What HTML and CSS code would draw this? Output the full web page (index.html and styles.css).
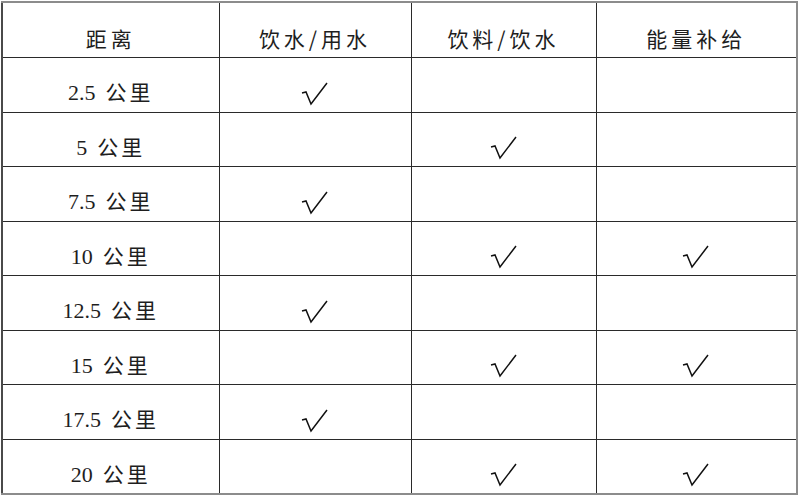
FILE: index.html
```html
<!DOCTYPE html>
<html lang="zh">
<head>
<meta charset="utf-8">
<link rel="stylesheet" href="styles.css">
</head>
<body>
<table class="grid">
  <colgroup>
    <col class="c1"><col class="c2"><col class="c3"><col class="c4">
  </colgroup>
  <thead>
    <tr class="head">
      <th>距离</th><th>饮水/用水</th><th>饮料/饮水</th><th>能量补给</th>
    </tr>
  </thead>
  <tbody>
    <tr><td class="km">2.5<span class="unit">公里</span></td><td><svg class="tick" viewBox="0 0 28 24"><path d="M1 11 L5 10 L10 22 L26 1"/></svg></td><td></td><td></td></tr>
    <tr><td class="km">5<span class="unit">公里</span></td><td></td><td><svg class="tick" viewBox="0 0 28 24"><path d="M1 11 L5 10 L10 22 L26 1"/></svg></td><td></td></tr>
    <tr><td class="km">7.5<span class="unit">公里</span></td><td><svg class="tick" viewBox="0 0 28 24"><path d="M1 11 L5 10 L10 22 L26 1"/></svg></td><td></td><td></td></tr>
    <tr><td class="km">10<span class="unit">公里</span></td><td></td><td><svg class="tick" viewBox="0 0 28 24"><path d="M1 11 L5 10 L10 22 L26 1"/></svg></td><td><svg class="tick" viewBox="0 0 28 24"><path d="M1 11 L5 10 L10 22 L26 1"/></svg></td></tr>
    <tr><td class="km">12.5<span class="unit">公里</span></td><td><svg class="tick" viewBox="0 0 28 24"><path d="M1 11 L5 10 L10 22 L26 1"/></svg></td><td></td><td></td></tr>
    <tr><td class="km">15<span class="unit">公里</span></td><td></td><td><svg class="tick" viewBox="0 0 28 24"><path d="M1 11 L5 10 L10 22 L26 1"/></svg></td><td><svg class="tick" viewBox="0 0 28 24"><path d="M1 11 L5 10 L10 22 L26 1"/></svg></td></tr>
    <tr><td class="km">17.5<span class="unit">公里</span></td><td><svg class="tick" viewBox="0 0 28 24"><path d="M1 11 L5 10 L10 22 L26 1"/></svg></td><td></td><td></td></tr>
    <tr><td class="km">20<span class="unit">公里</span></td><td></td><td><svg class="tick" viewBox="0 0 28 24"><path d="M1 11 L5 10 L10 22 L26 1"/></svg></td><td><svg class="tick" viewBox="0 0 28 24"><path d="M1 11 L5 10 L10 22 L26 1"/></svg></td></tr>
  </tbody>
</table>
</body>
</html>
```
FILE: styles.css
```css
html, body {
  margin: 0;
  padding: 0;
  background: #ffffff;
}
body {
  padding: 1px 0 0 1px;
}
.grid {
  border-collapse: collapse;
  table-layout: fixed;
  width: 796px;
  border: 2px solid #8c8c8c;
  border-left-color: #4a4a4a;
  color: #1e1e1e;
  font-family: "Liberation Serif", "Noto Sans CJK SC", serif;
  font-size: 22px;
}
.c1 { width: 217px; }
.c2 { width: 192px; }
.c3 { width: 185px; }
.c4 { width: 201px; }
.grid th, .grid td {
  border: 1px solid #2a2a2a;
  text-align: center;
  vertical-align: middle;
  padding: 16px 0 0 0;
  line-height: 24px;
  box-sizing: content-box;
}
.grid th {
  font-weight: normal;
  height: 39px;
  padding-top: 15px;
  letter-spacing: 4px;
  font-family: "Noto Sans CJK SC", sans-serif;
  font-size: 21px;
}
.grid tbody tr:nth-child(odd) td {
  height: 38px;
}
.grid tbody tr:nth-child(even) td {
  height: 37px;
}
.unit {
  margin-left: 10px;
  letter-spacing: 3px;
  font-size: 21px;
}
.tick {
  display: inline-block;
  width: 28px;
  height: 24px;
  vertical-align: middle;
}
.tick path {
  fill: none;
  stroke: #111;
  stroke-width: 1.5;
  stroke-linejoin: miter;
}
```
